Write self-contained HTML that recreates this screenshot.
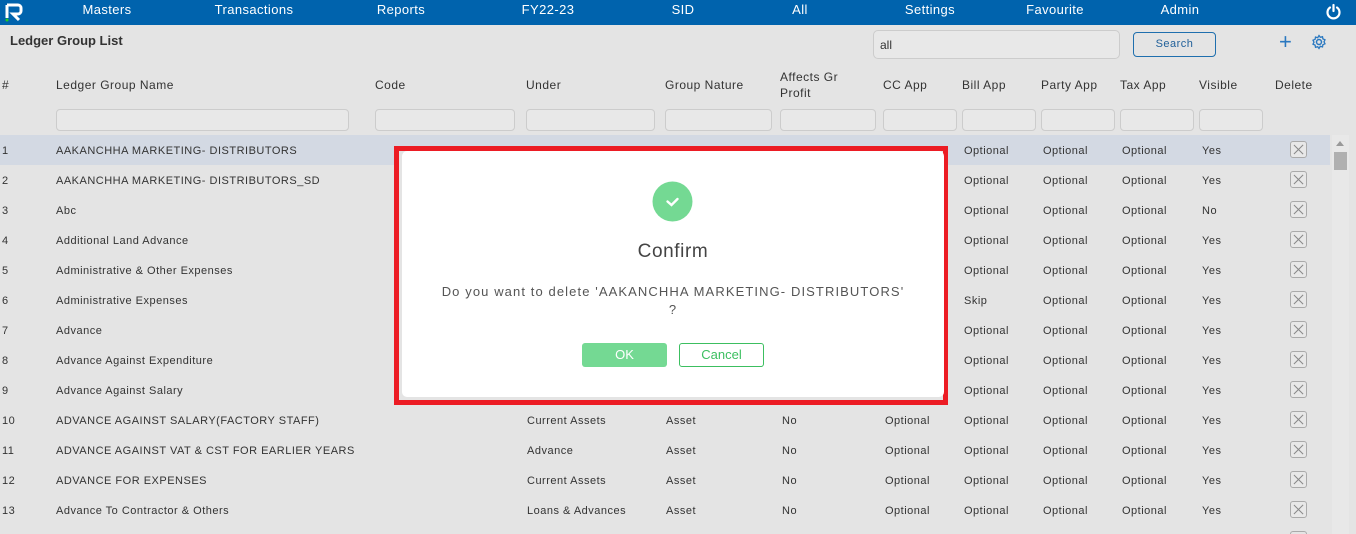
<!DOCTYPE html>
<html><head><meta charset="utf-8"><style>
*{margin:0;padding:0;box-sizing:border-box}
html,body{width:1356px;height:534px;overflow:hidden}
body{background:#e4e4e4;font-family:"Liberation Sans",sans-serif;color:#333;position:relative}
.nav{position:absolute;left:0;top:0;width:1356px;height:25px;background:#0063ad}
.nav span{position:absolute;top:2px;color:#fff;font-size:13px;letter-spacing:.4px;transform:translateX(-50%)}
.a{position:absolute;white-space:nowrap}
.h{font-size:12px;letter-spacing:.5px;color:#333}
.f{position:absolute;top:109px;height:22px;border:1px solid #ccc;border-radius:4px;background:#e8e8e8}
.r{position:absolute;left:0;width:1330px;height:30px;font-size:11px;letter-spacing:.5px;color:#333}
.r span{position:absolute;top:10px;white-space:nowrap}
.x{position:absolute;left:1290px;top:6px;width:17px;height:17px;border:1px solid #aaa;border-radius:3px;background:#e8e8e8}
.x:before,.x:after{content:"";position:absolute;left:7px;top:1px;width:1.2px;height:13px;background:#888;transform:rotate(45deg)}
.x:after{transform:rotate(-45deg)}
</style></head><body>
<div class="nav">
<svg style="position:absolute;left:4px;top:3px" width="20" height="19" viewBox="0 0 20 19"><path d="M3 2h11a3 3 0 0 1 3 3v3a3 3 0 0 1-3 3H9l6 6" stroke="#fff" stroke-width="3" fill="none"/><path d="M3 2v13" stroke="#fff" stroke-width="3"/><circle cx="3" cy="17" r="1.5" fill="#2c2"/></svg>
<span style="left:107px">Masters</span><span style="left:254px">Transactions</span><span style="left:401px">Reports</span><span style="left:548px">FY22-23</span><span style="left:683px">SID</span><span style="left:800px">All</span><span style="left:930px">Settings</span><span style="left:1055px">Favourite</span><span style="left:1180px">Admin</span>
<svg style="position:absolute;left:1325px;top:3px" width="17" height="17" viewBox="0 0 17 17"><path d="M5 4.5a6 6 0 1 0 7 0" stroke="#fff" stroke-width="2.2" fill="none" stroke-linecap="round"/><path d="M8.5 2v6" stroke="#fff" stroke-width="2.2" stroke-linecap="round"/></svg>
</div>
<div class="a" style="left:10px;top:33px;font-size:13px;font-weight:bold;color:#333">Ledger Group List</div>
<div class="a" style="left:873px;top:30px;width:247px;height:29px;border:1px solid #ccc;border-radius:5px;background:#e8e8e8;font-size:12px;padding:7px 6px">all</div>
<div class="a" style="left:1133px;top:32px;width:83px;height:25px;border:1px solid #1f6fae;border-radius:4px;font-size:11px;color:#1f5f99;text-align:center;line-height:23px;letter-spacing:.5px">Search</div>
<div class="a" style="left:1279px;top:29px;font-size:22px;color:#2a78c0;line-height:26px">+</div>
<svg class="a" style="left:1311px;top:34px" width="16" height="16" viewBox="0 0 16 16"><circle cx="8" cy="8" r="2.5" stroke="#2a78c0" stroke-width="1.5" fill="none"/><path d="M8 1.5l1.3 1.8 2.2-.6.4 2.2 2.1.9-1 2 1 2-2.1.9-.4 2.2-2.2-.6L8 14.5l-1.3-1.8-2.2.6-.4-2.2-2.1-.9 1-2-1-2 2.1-.9.4-2.2 2.2.6z" stroke="#2a78c0" stroke-width="1.3" fill="none"/></svg>
<div class="a h" style="left:2px;top:78px">#</div>
<div class="a h" style="left:56px;top:78px">Ledger Group Name</div>
<div class="a h" style="left:375px;top:78px">Code</div>
<div class="a h" style="left:526px;top:78px">Under</div>
<div class="a h" style="left:665px;top:78px">Group Nature</div>
<div class="a h" style="left:780px;top:69px;line-height:16px">Affects Gr<br>Profit</div>
<div class="a h" style="left:883px;top:78px">CC App</div>
<div class="a h" style="left:962px;top:78px">Bill App</div>
<div class="a h" style="left:1041px;top:78px">Party App</div>
<div class="a h" style="left:1120px;top:78px">Tax App</div>
<div class="a h" style="left:1199px;top:78px">Visible</div>
<div class="a h" style="left:1275px;top:78px">Delete</div>
<div class="f" style="left:56px;width:293px"></div><div class="f" style="left:375px;width:140px"></div><div class="f" style="left:526px;width:129px"></div><div class="f" style="left:665px;width:107px"></div><div class="f" style="left:780px;width:96px"></div><div class="f" style="left:883px;width:74px"></div><div class="f" style="left:962px;width:74px"></div><div class="f" style="left:1041px;width:74px"></div><div class="f" style="left:1120px;width:74px"></div><div class="f" style="left:1199px;width:64px"></div>
<div class="r" style="top:135px;background:#d3d9e3"><span style="left:2px">1</span><span style="left:56px">AAKANCHHA MARKETING- DISTRIBUTORS</span><span style="left:964px">Optional</span><span style="left:1043px">Optional</span><span style="left:1122px">Optional</span><span style="left:1202px">Yes</span><div class="x"></div></div>
<div class="r" style="top:165px"><span style="left:2px">2</span><span style="left:56px">AAKANCHHA MARKETING- DISTRIBUTORS_SD</span><span style="left:964px">Optional</span><span style="left:1043px">Optional</span><span style="left:1122px">Optional</span><span style="left:1202px">Yes</span><div class="x"></div></div>
<div class="r" style="top:195px"><span style="left:2px">3</span><span style="left:56px">Abc</span><span style="left:964px">Optional</span><span style="left:1043px">Optional</span><span style="left:1122px">Optional</span><span style="left:1202px">No</span><div class="x"></div></div>
<div class="r" style="top:225px"><span style="left:2px">4</span><span style="left:56px">Additional Land Advance</span><span style="left:964px">Optional</span><span style="left:1043px">Optional</span><span style="left:1122px">Optional</span><span style="left:1202px">Yes</span><div class="x"></div></div>
<div class="r" style="top:255px"><span style="left:2px">5</span><span style="left:56px">Administrative &amp; Other Expenses</span><span style="left:964px">Optional</span><span style="left:1043px">Optional</span><span style="left:1122px">Optional</span><span style="left:1202px">Yes</span><div class="x"></div></div>
<div class="r" style="top:285px"><span style="left:2px">6</span><span style="left:56px">Administrative Expenses</span><span style="left:964px">Skip</span><span style="left:1043px">Optional</span><span style="left:1122px">Optional</span><span style="left:1202px">Yes</span><div class="x"></div></div>
<div class="r" style="top:315px"><span style="left:2px">7</span><span style="left:56px">Advance</span><span style="left:964px">Optional</span><span style="left:1043px">Optional</span><span style="left:1122px">Optional</span><span style="left:1202px">Yes</span><div class="x"></div></div>
<div class="r" style="top:345px"><span style="left:2px">8</span><span style="left:56px">Advance Against Expenditure</span><span style="left:964px">Optional</span><span style="left:1043px">Optional</span><span style="left:1122px">Optional</span><span style="left:1202px">Yes</span><div class="x"></div></div>
<div class="r" style="top:375px"><span style="left:2px">9</span><span style="left:56px">Advance Against Salary</span><span style="left:964px">Optional</span><span style="left:1043px">Optional</span><span style="left:1122px">Optional</span><span style="left:1202px">Yes</span><div class="x"></div></div>
<div class="r" style="top:405px"><span style="left:2px">10</span><span style="left:56px">ADVANCE AGAINST SALARY(FACTORY STAFF)</span><span style="left:527px">Current Assets</span><span style="left:666px">Asset</span><span style="left:782px">No</span><span style="left:885px">Optional</span><span style="left:964px">Optional</span><span style="left:1043px">Optional</span><span style="left:1122px">Optional</span><span style="left:1202px">Yes</span><div class="x"></div></div>
<div class="r" style="top:435px"><span style="left:2px">11</span><span style="left:56px">ADVANCE AGAINST VAT &amp; CST FOR EARLIER YEARS</span><span style="left:527px">Advance</span><span style="left:666px">Asset</span><span style="left:782px">No</span><span style="left:885px">Optional</span><span style="left:964px">Optional</span><span style="left:1043px">Optional</span><span style="left:1122px">Optional</span><span style="left:1202px">Yes</span><div class="x"></div></div>
<div class="r" style="top:465px"><span style="left:2px">12</span><span style="left:56px">ADVANCE FOR EXPENSES</span><span style="left:527px">Current Assets</span><span style="left:666px">Asset</span><span style="left:782px">No</span><span style="left:885px">Optional</span><span style="left:964px">Optional</span><span style="left:1043px">Optional</span><span style="left:1122px">Optional</span><span style="left:1202px">Yes</span><div class="x"></div></div>
<div class="r" style="top:495px"><span style="left:2px">13</span><span style="left:56px">Advance To Contractor &amp; Others</span><span style="left:527px">Loans &amp; Advances</span><span style="left:666px">Asset</span><span style="left:782px">No</span><span style="left:885px">Optional</span><span style="left:964px">Optional</span><span style="left:1043px">Optional</span><span style="left:1122px">Optional</span><span style="left:1202px">Yes</span><div class="x"></div></div>
<div class="a" style="left:1290px;top:531px;width:17px;height:3px;border:1px solid #aaa;border-bottom:0;border-radius:3px 3px 0 0"></div>
<div class="a" style="left:1332px;top:135px;width:17px;height:399px;background:#e8e8e8"></div>
<div class="a" style="left:1336px;top:141px;width:0;height:0;border:4px solid transparent;border-bottom:5px solid #999;border-top:0"></div>
<div class="a" style="left:1334px;top:152px;width:13px;height:18px;background:#b0b0b0"></div>
<div class="a" style="left:394px;top:146px;width:554px;height:259px;border:5px solid #ec1c24;background:#e4e4e4"></div>
<div class="a" style="left:402px;top:151px;width:542px;height:246px;background:#fff;border-radius:5px"></div>
<svg class="a" style="left:652px;top:181px" width="41" height="41" viewBox="0 0 41 41"><circle cx="20.5" cy="20.5" r="20" fill="#74d993"/><path d="M15.5 20.5l4 3.5 6-6" stroke="#fff" stroke-width="2.4" fill="none" stroke-linecap="round"/></svg>
<div class="a" style="left:402px;width:542px;top:241px;text-align:center;font-size:19px;color:#444;letter-spacing:.6px">Confirm</div>
<div class="a" style="left:402px;width:542px;top:283px;text-align:center;font-size:13px;color:#555;letter-spacing:1.1px;line-height:18px">Do you want to delete 'AAKANCHHA MARKETING- DISTRIBUTORS'<br>?</div>
<div class="a" style="left:582px;top:343px;width:85px;height:24px;background:#74d993;border-radius:3px;color:#fff;font-size:13px;text-align:center;line-height:24px">OK</div>
<div class="a" style="left:679px;top:343px;width:85px;height:24px;border:1px solid #3cbf60;border-radius:3px;color:#3cbf60;font-size:13px;text-align:center;line-height:22px">Cancel</div>
</body></html>
